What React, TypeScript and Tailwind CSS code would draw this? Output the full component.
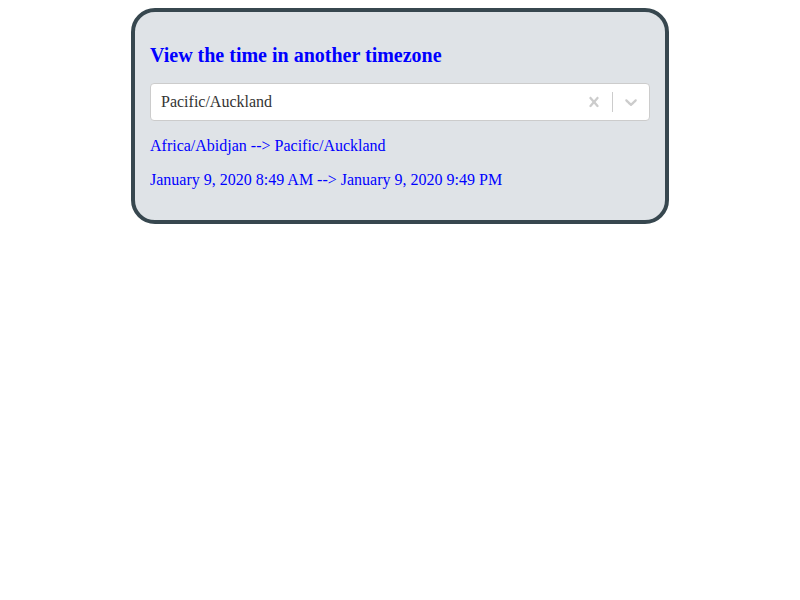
export default function App() {
  return (
    <div className="flex justify-center pt-2 font-['Liberation_Serif',serif]">
      <div className="w-[538px] rounded-[24px] border-4 border-[#37474f] bg-[#dfe3e7] p-[15px]">
        {/* heading */}
        <h3 className="mt-4 mb-4 text-[20px] leading-[24px] font-bold text-[#0000ff]">
          View the time in another timezone
        </h3>

        {/* timezone picker, looks like react-select */}
        <div className="flex h-[38px] items-center rounded border border-[#cccccc] bg-white">
          <div className="flex-1 px-2 py-0.5">
            <span className="mx-0.5 text-base text-[#333333]">Pacific/Auckland</span>
          </div>
          <div className="flex items-center self-stretch">
            <div className="p-2 text-[#cccccc]">
              <svg width="20" height="20" viewBox="0 0 20 20" fill="currentColor">
                <path d="M14.348 14.849c-0.469 0.469-1.229 0.469-1.697 0l-2.651-3.030-2.651 3.029c-0.469 0.469-1.229 0.469-1.697 0-0.469-0.469-0.469-1.229 0-1.697l2.758-3.15-2.759-3.152c-0.469-0.469-0.469-1.228 0-1.697s1.228-0.469 1.697 0l2.652 3.031 2.651-3.031c0.469-0.469 1.228-0.469 1.697 0s0.469 1.229 0 1.697l-2.758 3.152 2.758 3.150c0.469 0.469 0.469 1.229 0 1.698z" />
              </svg>
            </div>
            <span className="my-2 w-px self-stretch bg-[#cccccc]" />
            <div className="p-2 text-[#cccccc]">
              <svg width="20" height="20" viewBox="0 0 20 20" fill="currentColor">
                <path d="M4.516 7.548c0.436-0.446 1.043-0.481 1.576 0l3.924 3.747 3.921-3.747c0.533-0.481 1.141-0.446 1.574 0 0.436 0.445 0.408 1.197 0 1.615-0.406 0.418-4.695 4.502-4.695 4.502-0.217 0.223-0.502 0.335-0.787 0.335s-0.57-0.112-0.789-0.335c0 0-4.287-4.084-4.695-4.502s-0.436-1.17 0-1.615z" />
              </svg>
            </div>
          </div>
        </div>

        <p className="mt-4 text-base leading-[18px] text-[#0000ff]">Africa/Abidjan --&gt; Pacific/Auckland</p>
        <p className="my-4 text-base leading-[18px] text-[#0000ff]">
          January 9, 2020 8:49 AM --&gt; January 9, 2020 9:49 PM
        </p>
      </div>
    </div>
  );
}
